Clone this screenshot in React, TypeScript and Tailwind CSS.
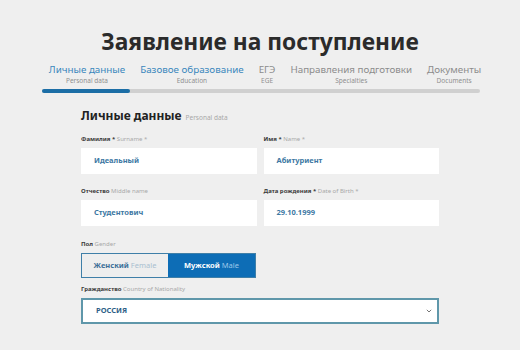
import React from "react";

const font = { fontFamily: '"Noto Sans", "Open Sans", sans-serif' };

function Tab({ ru, en, active }: { ru: string; en: string; active?: boolean }) {
  return (
    <div className="flex flex-col items-center">
      <div className={`text-[9.8px] leading-[12px] ${active ? "text-[#3a87bd]" : "text-[#8c8c8c]"}`}>{ru}</div>
      <div className="text-[6.5px] leading-[9px] text-[#8f8f8f]">{en}</div>
    </div>
  );
}

function Label({ ru, en }: { ru: string; en: string }) {
  return (
    <div className="text-[6px] leading-[8px] h-[8px] mb-[5px]">
      <span className="font-bold text-[#3a3a3a]">{ru}</span>{" "}
      <span className="text-[#a8a8a8]">{en}</span>
    </div>
  );
}

function Field({ ru, en, value }: { ru: string; en: string; value: string }) {
  return (
    <div className="flex flex-col">
      <Label ru={ru} en={en} />
      <div className="h-[26px] bg-white flex items-center pl-[13px] text-[7.5px] font-bold text-[#3d78a3]">{value}</div>
    </div>
  );
}

export default function App() {
  return (
    <div className="w-[520px] h-[350px] bg-[#efefef] overflow-hidden" style={font}>
      <div className="pt-[28px] text-center text-[22.8px] leading-[28px] font-bold text-[#2b2b2b]">
        Заявление на поступление
      </div>
      <div className="mt-[8px] flex justify-center gap-[15px] pl-[10px]">
        <Tab ru="Личные данные" en="Personal data" active />
        <Tab ru="Базовое образование" en="Education" active />
        <Tab ru="ЕГЭ" en="EGE" />
        <Tab ru="Направления подготовки" en="Specialties" />
        <Tab ru="Документы" en="Documents" />
      </div>
      <div className="ml-[42px] mr-[40px] mt-[4px] h-[4px] rounded-full bg-[#d0d0d0] flex">
        <div className="w-[88px] h-full rounded-full bg-[#1c6ea6]" />
      </div>
      <div className="w-[358px] mx-auto mt-[15px]">
        <div className="flex items-baseline gap-[4px]">
          <span className="text-[12px] leading-[16px] font-bold text-[#222]">Личные данные</span>
          <span className="text-[6.5px] text-[#a8a8a8]">Personal data</span>
        </div>
        <div className="mt-[11px] grid grid-cols-2 gap-x-[7px] gap-y-[13px]">
          <Field ru="Фамилия *" en="Surname *" value="Идеальный" />
          <Field ru="Имя *" en="Name *" value="Абитуриент" />
          <Field ru="Отчество" en="Middle name" value="Студентович" />
          <Field ru="Дата рождения *" en="Date of Birth *" value="29.10.1999" />
        </div>
        <div className="mt-[14px]">
          <Label ru="Пол" en="Gender" />
          <div className="w-[175px] h-[25px] border border-[#3f7fa8] flex text-[7.5px]">
            <div className="w-[86px] bg-[#eeeeee] flex items-center justify-center">
              <span className="font-bold text-[#3d6f98]">Женский</span>&nbsp;<span className="text-[#a9bfd0]">Female</span>
            </div>
            <div className="flex-1 bg-[#0d6db6] flex items-center justify-center">
              <span className="font-bold text-white">Мужской</span>&nbsp;<span className="text-[#9dc8ea]">Male</span>
            </div>
          </div>
        </div>
        <div className="mt-[7px]">
          <Label ru="Гражданство" en="Country of Nationality" />
          <div className="h-[26px] bg-white border-2 border-[#5f97aa] flex items-center pl-[13px] pr-[4px] text-[7.5px] font-bold text-[#2f5f88]">
            <span className="flex-1">РОССИЯ</span>
            <svg width="6" height="4" viewBox="0 0 6 4" className="mr-[1px]">
              <path d="M0.8 0.8 L3 3 L5.2 0.8" fill="none" stroke="#666" strokeWidth="0.9" />
            </svg>
          </div>
        </div>
      </div>
    </div>
  );
}
